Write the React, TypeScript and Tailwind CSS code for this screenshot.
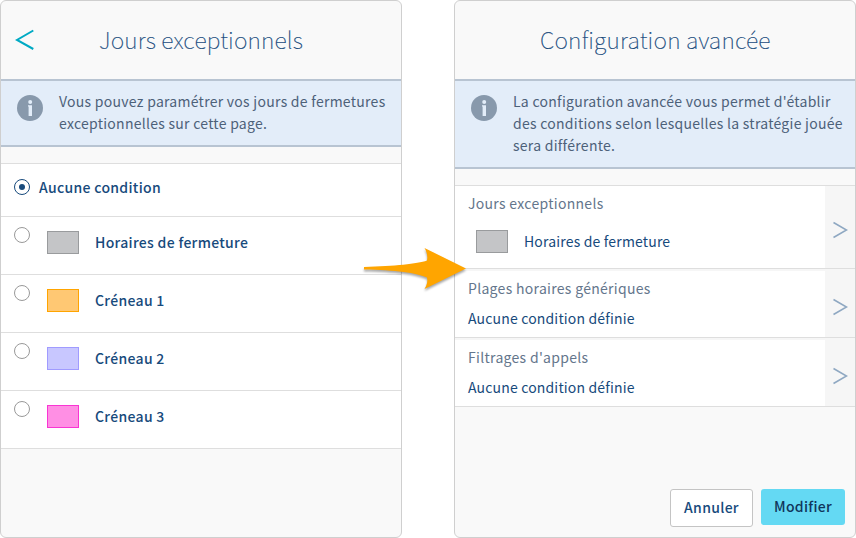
import type { ReactNode } from "react";

const sans = "font-['Noto_Sans_CJK_SC','Noto_Sans',sans-serif]";

function Panel({ children }: { children: ReactNode }) {
  return (
    <section className="flex h-[538px] w-[402px] flex-col overflow-hidden rounded-md border border-[#cfcfcf] bg-[#f9f9f9]">
      {children}
    </section>
  );
}

function Title({ children, className }: { children: ReactNode; className: string }) {
  return (
    <h1
      className={`-mt-[2px] text-[23px] leading-8 font-thin whitespace-nowrap text-[#174a7c] [-webkit-text-stroke:0.2px_#174a7c] ${className}`}
    >
      {children}
    </h1>
  );
}

function InfoIcon() {
  return (
    <svg width="26" height="26" viewBox="0 0 26 26" className="mt-[14px] shrink-0">
      <circle cx="13" cy="13" r="13" fill="#8899ac" />
      <circle cx="13.2" cy="6.9" r="2" fill="#e3edf9" />
      <path d="M11 10.2h4v10.8h-3.4v-9.4H11z" fill="#e3edf9" />
    </svg>
  );
}

function Banner({ lines, className }: { lines: string[]; className: string }) {
  return (
    <div className={`flex shrink-0 items-start border-y-2 border-[#b8c4d2] bg-[#e3edf9] pl-4 ${className}`}>
      <InfoIcon />
      <div className="mt-[9px] ml-4 text-[14px] leading-[22px] tracking-[0.27px] whitespace-nowrap text-[#4d6179]">
        {lines.map((line) => (
          <p key={line}>{line}</p>
        ))}
      </div>
    </div>
  );
}

function Radio({ checked = false }: { checked?: boolean }) {
  return (
    <span
      className={`flex size-4 shrink-0 items-center justify-center rounded-full border bg-white ${
        checked ? "border-[#174a7c]" : "border-[#999]"
      }`}
    >
      {checked && <span className="size-[6px] rounded-full bg-[#174a7c]" />}
    </span>
  );
}

const slots = [
  { name: "Horaires de fermeture", color: "border-[#999b9d] bg-[#c4c5c7]" },
  { name: "Créneau 1", color: "border-[#ffa400] bg-[#ffc873]" },
  { name: "Créneau 2", color: "border-[#a09bff] bg-[#c8c7ff]" },
  { name: "Créneau 3", color: "border-[#f935d3] bg-[#ff8fe4]" },
];

function Chevron() {
  return (
    <span className="flex w-[30px] shrink-0 items-center justify-center bg-[#f6f6f6]">
      <svg width="16" height="18" viewBox="0 0 16 18" fill="none" className="mt-[6px]">
        <path d="M1.5 1.5 14.5 9 1.5 16.5" stroke="#8fa8c2" strokeWidth="1.6" />
      </svg>
    </span>
  );
}

function Setting({ title, children, className }: { title: string; children: ReactNode; className: string }) {
  return (
    <div className={`flex shrink-0 border-b border-[#dedede] bg-white ${className}`}>
      <div className="flex-1 pl-[13px] text-[14px] leading-[22px] tracking-[0.3px] text-[#64768c]">
        <p className="mt-[6px]">{title}</p>
        {children}
      </div>
      <Chevron />
    </div>
  );
}

function Arrow() {
  return (
    <svg
      width="112"
      height="52"
      viewBox="0 0 112 52"
      className="absolute top-[243px] left-[360px] drop-shadow-[0_2px_1px_rgba(0,0,0,0.35)]"
    >
      <path d="M4 24C35 23 57 21 67 17.5C68 14 67 9 64.5 5L106 25.5L64.5 46C67 42 68 38 67 34.5C57 30 35 27 4 26.5Z" fill="#ffa500" />
    </svg>
  );
}

export default function App() {
  return (
    <main className={`relative flex h-[538px] w-[856px] justify-between overflow-hidden bg-white ${sans}`}>
      <Panel>
        <header className="flex h-[78px] shrink-0 items-center pl-[14px]">
          <svg width="20" height="22" viewBox="0 0 20 22" fill="none">
            <path d="M18.3 1.5 2 11l16.3 9" stroke="#00aac4" strokeWidth="2" />
          </svg>
          <Title className="ml-[64px] tracking-[0.15px]">Jours exceptionnels</Title>
        </header>
        <Banner
          className="h-[68px]"
          lines={["Vous pouvez paramétrer vos jours de fermetures", "exceptionnelles sur cette page."]}
        />
        <ul className="mt-4 border-t border-[#dedede] bg-white text-[14px] leading-[22px] font-medium tracking-[0.31px] text-[#174a7c]">
          <li className="flex h-[53px] items-start border-b border-[#dedede] pt-[15px] pl-[13px]">
            <Radio checked />
            <span className="-mt-[3px] ml-[9px]">Aucune condition</span>
          </li>
          {slots.map((slot) => (
            <li key={slot.name} className="flex h-[58px] items-start border-b border-[#dedede] pt-[10px] pl-[13px]">
              <Radio />
              <span className={`mt-1 ml-[17px] h-[23px] w-8 border ${slot.color}`} />
              <span className="mt-1 ml-4">{slot.name}</span>
            </li>
          ))}
        </ul>
      </Panel>
      <Panel>
        <header className="flex h-[78px] shrink-0 items-center pl-[85px]">
          <Title className="tracking-[0.2px]">Configuration avancée</Title>
        </header>
        <Banner
          className="h-[90px]"
          lines={[
            "La configuration avancée vous permet d'établir",
            "des conditions selon lesquelles la stratégie jouée",
            "sera différente.",
          ]}
        />
        <div className="mt-4 flex flex-col gap-[2px] border-t border-[#dedede] bg-[#f6f6f6]">
          <Setting title="Jours exceptionnels" className="h-[83px]">
            <div className="mt-4 flex items-center pl-2 tracking-[0.17px] text-[#174a7c]">
              <span className="h-[23px] w-8 border border-[#999b9d] bg-[#c4c5c7]" />
              <span className="-mt-[2px] ml-4">Horaires de fermeture</span>
            </div>
          </Setting>
          <Setting title="Plages horaires génériques" className="h-[67px]">
            <p className="mt-2 tracking-[0.17px] text-[#174a7c]">Aucune condition définie</p>
          </Setting>
          <Setting title="Filtrages d'appels" className="h-[67px]">
            <p className="mt-2 tracking-[0.17px] text-[#174a7c]">Aucune condition définie</p>
          </Setting>
        </div>
        <footer className="mt-auto mb-[10px] flex items-start justify-end gap-2 pr-[10px] text-[14px] font-medium tracking-[0.3px]">
          <button className="h-[38px] w-[83px] rounded-[3px] border border-[#c4c4c4] bg-white pb-[2px] text-[#174a7c]">Annuler</button>
          <button className="h-9 w-[84px] rounded-[3px] bg-[#64d9f3] pb-[2px] text-[#10355c]">Modifier</button>
        </footer>
      </Panel>
      <Arrow />
    </main>
  );
}
